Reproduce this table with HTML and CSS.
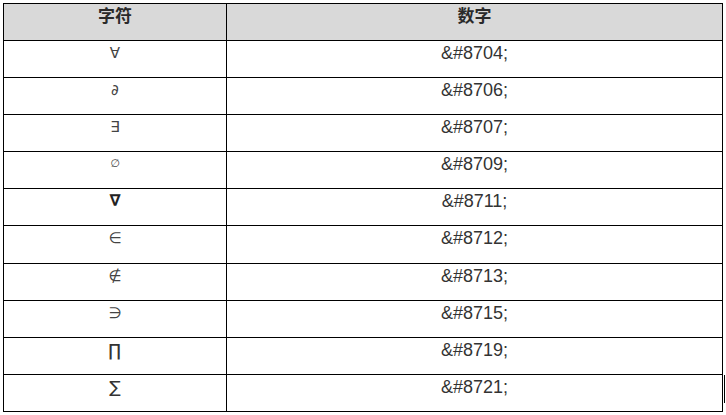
FILE: index.html
```html
<!DOCTYPE html>
<html lang="zh">
<head>
<meta charset="utf-8">
<title>符号</title>
<link rel="stylesheet" href="styles.css">
</head>
<body>
<div class="page">
<table class="ref">
  <thead>
    <tr><th class="c1">字符</th><th class="c2">数字</th></tr>
  </thead>
  <tbody>
    <tr><td class="sym">&#8704;</td><td>&amp;#8704;</td></tr>
    <tr><td class="sym">&#8706;</td><td>&amp;#8706;</td></tr>
    <tr><td class="sym">&#8707;</td><td>&amp;#8707;</td></tr>
    <tr><td class="sym small">&#8709;</td><td>&amp;#8709;</td></tr>
    <tr><td class="sym heavy">&#8711;</td><td>&amp;#8711;</td></tr>
    <tr><td class="sym">&#8712;</td><td>&amp;#8712;</td></tr>
    <tr><td class="sym">&#8713;</td><td>&amp;#8713;</td></tr>
    <tr><td class="sym">&#8715;</td><td>&amp;#8715;</td></tr>
    <tr><td class="sym big">&#8719;</td><td>&amp;#8719;</td></tr>
    <tr><td class="sym big">&#8721;</td><td>&amp;#8721;</td></tr>
  </tbody>
</table>
<span class="mark"></span>
</div>
</body>
</html>
```
FILE: styles.css
```css
html, body {
  margin: 0;
  padding: 0;
  background: #fff;
}
.page {
  position: relative;
  padding: 3px 0 0 3px;
}
.ref {
  border-collapse: collapse;
  width: 720px;
  font-family: "Liberation Sans", Arial, sans-serif;
  font-size: 18px;
  color: #333;
}
.ref th, .ref td {
  border: 1px solid #000;
  text-align: center;
  vertical-align: top;
  padding: 2px 0 0 0;
  height: 34.1px;
  line-height: 20px;
}
.ref th {
  background: #d9d9d9;
  font-family: "Noto Sans CJK SC", sans-serif;
  font-weight: bold;
  font-size: 17px;
  color: #2a2a2a;
  padding-top: 1px;
  height: 35px;
}
.c1 { width: 222px; }
.sym {
  font-family: "DejaVu Sans", sans-serif;
  font-size: 15px;
  color: #444;
}
.sym.small { font-size: 11px; }
.sym.heavy { font-weight: bold; color: #222; font-size: 16px; }
.sym.big { font-size: 17px; color: #333; }
.mark {
  position: absolute;
  left: 724px;
  top: 375px;
  width: 1px;
  height: 28px;
  background: #000;
}
```
